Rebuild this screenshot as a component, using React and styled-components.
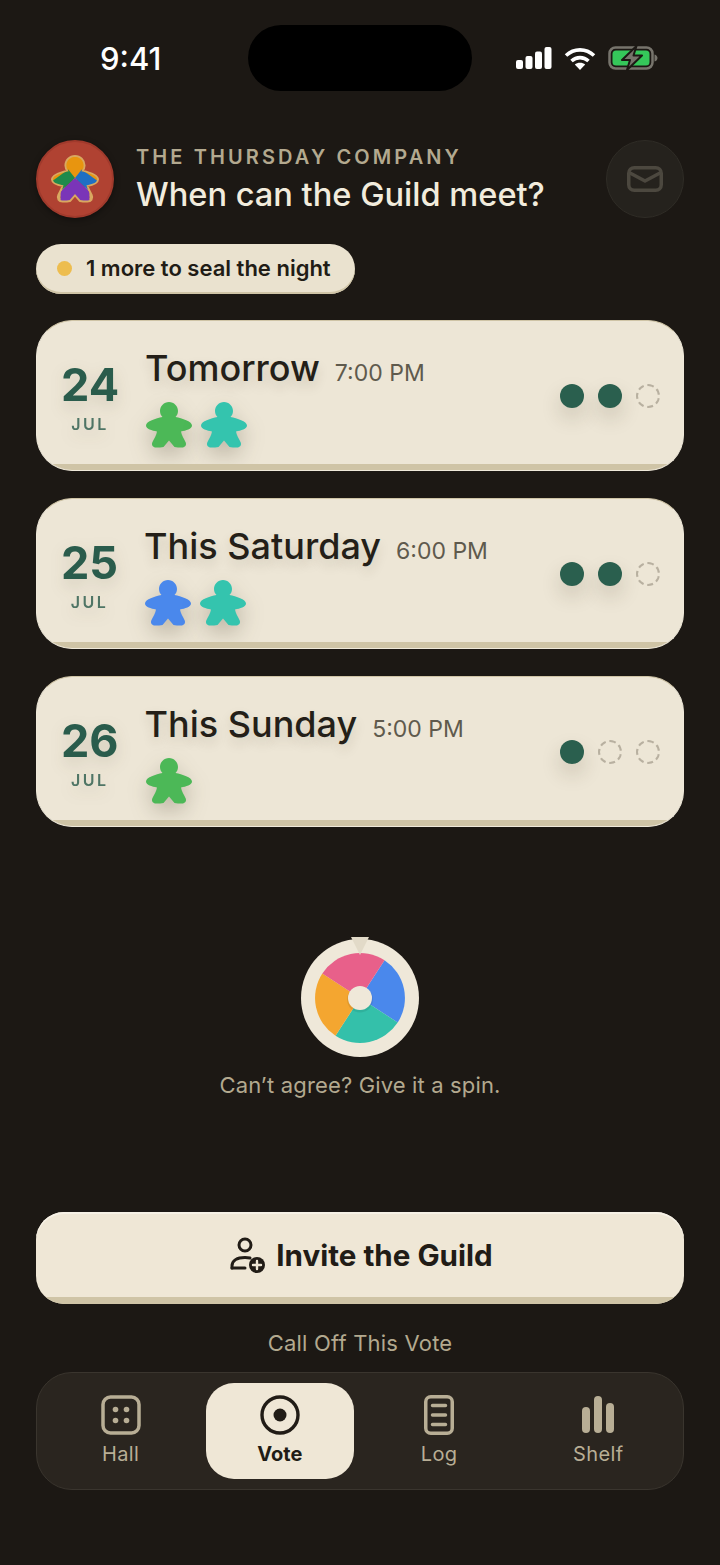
import React from 'react'
import styled, { createGlobalStyle } from 'styled-components'

const MEEPLE = 'M23 0C28 0 32 4 32 9C32 11.5 31 13.5 29.5 15C36 16.5 46 19 46 23.5C46 27 40 28.5 35 29.5C35.5 33 38 37 39.5 40C41 43 39 45.5 36 45.5C33 45.5 30.5 45.5 28.5 45L23 38.5L17.5 45C15.5 45.5 13 45.5 10 45.5C7 45.5 5 43 6.5 40C8 37 10.5 33 11 29.5C6 28.5 0 27 0 23.5C0 19 10 16.5 16.5 15C15 13.5 14 11.5 14 9C14 4 18 0 23 0Z'

const GREEN = '#4cb857'
const TEAL = '#34c4ae'
const BLUE = '#4a88ec'

const nights = [
  { day: '24', title: 'Tomorrow', time: '7:00 PM', meeples: [GREEN, TEAL], votes: 2 },
  { day: '25', title: 'This Saturday', time: '6:00 PM', meeples: [BLUE, TEAL], votes: 2 },
  { day: '26', title: 'This Sunday', time: '5:00 PM', meeples: [GREEN], votes: 1 },
]

const GlobalStyle = createGlobalStyle`
  html, body {
    margin: 0;
    padding: 0;
    background: #1c1814;
  }
  * {
    box-sizing: border-box;
  }
`

const Meeple = ({ color }) => (
  <MeepleIcon width="46" height="46" viewBox="0 0 46 46">
    <path d={MEEPLE} fill={color} />
  </MeepleIcon>
)

const Signal = () => (
  <svg width="36" height="22" viewBox="0 0 36 22" fill="#fff">
    <rect x="0" y="13" width="7" height="9" rx="2" />
    <rect x="9.5" y="9" width="7" height="13" rx="2" />
    <rect x="19" y="4.5" width="7" height="17.5" rx="2" />
    <rect x="28.5" y="0" width="7" height="22" rx="2" />
  </svg>
)

const Wifi = () => (
  <svg width="32" height="23" viewBox="0 0 32 23" fill="none" stroke="#fff" strokeWidth="3.6">
    <path d="M2 8.5C10 1 22 1 30 8.5" />
    <path d="M7.5 14C12.5 9.5 19.5 9.5 24.5 14" />
    <path d="M16 23L10.8 17.5C13.5 15.2 18.5 15.2 21.2 17.5Z" fill="#fff" stroke="none" />
  </svg>
)

const Battery = () => (
  <svg width="50" height="26" viewBox="0 0 50 26" fill="none">
    <rect x="1.5" y="2.5" width="43" height="21" rx="6" stroke="#77746c" strokeWidth="2.5" />
    <rect x="4.5" y="5.5" width="37" height="15" rx="3.5" fill="#35c75a" />
    <path d="M46.5 9.5C48.5 10 49.5 11.5 49.5 13C49.5 14.5 48.5 16 46.5 16.5Z" fill="#77746c" />
    <path d="M28.5 1L14 15H22L19 25L34 10.5H25.5Z" fill="#77746c" stroke="#1c1814" strokeWidth="2" strokeLinejoin="round" />
  </svg>
)

const Crest = () => (
  <svg width="48" height="48" viewBox="-2 -2 50 50">
    <defs>
      <clipPath id="crest">
        <path d={MEEPLE} />
      </clipPath>
    </defs>
    <path d={MEEPLE} fill="none" stroke="#d9a860" strokeWidth="4" strokeLinejoin="round" />
    <g clipPath="url(#crest)">
      <rect x="0" y="0" width="46" height="24" fill="#e8950f" />
      <path d="M-2 26L16 13L23 22L10 34H-2Z" fill="#1f8a4c" />
      <path d="M48 26L30 13L23 22L36 34H48Z" fill="#1f6fc4" />
      <path d="M23 22L38 36V46H8V36Z" fill="#7a35b8" />
    </g>
  </svg>
)

const MailIcon = () => (
  <svg width="36" height="26" viewBox="0 0 36 26" fill="none" stroke="#4c483f" strokeWidth="3.5" strokeLinecap="round" strokeLinejoin="round">
    <rect x="1.75" y="1.75" width="32.5" height="22.5" rx="5.5" />
    <path d="M3 7L18 15L33 7" />
  </svg>
)

const InviteIcon = () => (
  <svg width="36" height="36" viewBox="0 0 36 36" fill="none" stroke="#211c16" strokeWidth="3" strokeLinecap="round">
    <circle cx="15" cy="8" r="6" />
    <path d="M2 31V29C2 23.5 7 20.5 15 20.5C17 20.5 18.5 20.7 20 21" />
    <path d="M2 31H15" />
    <circle cx="27" cy="28" r="8" fill="#211c16" stroke="none" />
    <path d="M27 24V32M23 28H31" stroke="#efe7d6" strokeWidth="2.4" />
  </svg>
)

const Wheel = () => (
  <svg width="90" height="90" viewBox="-45 -45 90 90">
    <path d="M0 0L24.5-37.7A45 45 0 0 1 37.7 24.5Z" fill="#4a88ec" />
    <path d="M0 0L37.7 24.5A45 45 0 0 1-24.5 37.7Z" fill="#34c0aa" />
    <path d="M0 0L-24.5 37.7A45 45 0 0 1-37.7-24.5Z" fill="#f4a630" />
    <path d="M0 0L-37.7-24.5A45 45 0 0 1 24.5-37.7Z" fill="#e8608a" />
    <circle r="13" cy="1.5" fill="#000" opacity="0.08" />
    <circle r="12" fill="#efe8d9" />
  </svg>
)

const DiceIcon = () => (
  <svg width="40" height="40" viewBox="0 0 40 40" fill="none">
    <rect x="2" y="2" width="36" height="36" rx="7.5" stroke="#b8ae95" strokeWidth="3.5" />
    <g fill="#b8ae95">
      <circle cx="14.5" cy="14.5" r="2.8" />
      <circle cx="25.5" cy="14.5" r="2.8" />
      <circle cx="14.5" cy="25.5" r="2.8" />
      <circle cx="25.5" cy="25.5" r="2.8" />
    </g>
  </svg>
)

const VoteIcon = () => (
  <svg width="40" height="40" viewBox="0 0 40 40" fill="none">
    <circle cx="20" cy="20" r="18" stroke="#211c16" strokeWidth="3.4" />
    <circle cx="20" cy="20" r="6.5" fill="#211c16" />
  </svg>
)

const LogIcon = () => (
  <svg width="30" height="40" viewBox="0 0 30 40" fill="none" stroke="#b8ae95" strokeWidth="3.5" strokeLinecap="round">
    <rect x="1.75" y="1.75" width="26.5" height="36.5" rx="5" />
    <path d="M8.5 10.5H21.5M8.5 20H21.5M8.5 29.5H21.5" />
  </svg>
)

const ShelfIcon = () => (
  <svg width="32" height="40" viewBox="0 0 32 40" fill="#b8ae95">
    <rect x="0" y="12" width="8" height="26" rx="4" />
    <rect x="12" y="1" width="8" height="37" rx="4" />
    <rect x="24" y="8" width="8" height="30" rx="4" />
  </svg>
)

const NightCard = ({ night }) => (
  <Card>
    <DateBlock>
      <Day>{night.day}</Day>
      <Month>JUL</Month>
    </DateBlock>
    <CardBody>
      <TitleRow>
        <NightTitle>{night.title}</NightTitle>
        <NightTime>{night.time}</NightTime>
      </TitleRow>
      <Meeples>
        {night.meeples.map((color, i) => (
          <Meeple key={i} color={color} />
        ))}
      </Meeples>
    </CardBody>
    <Dots>
      {[0, 1, 2].map((i) => (
        <Dot key={i} $filled={i < night.votes} />
      ))}
    </Dots>
  </Card>
)

export default function App() {
  return (
    <Screen>
      <GlobalStyle />
      <StatusBar>
        <Clock>9:41</Clock>
        <Island />
        <StatusIcons>
          <Signal />
          <Wifi />
          <Battery />
        </StatusIcons>
      </StatusBar>

      <Header>
        <Avatar>
          <Crest />
        </Avatar>
        <HeaderText>
          <Eyebrow>THE THURSDAY COMPANY</Eyebrow>
          <Heading>When can the Guild meet?</Heading>
        </HeaderText>
        <MailButton>
          <MailIcon />
        </MailButton>
      </Header>

      <Pill>
        <PillDot />
        1 more to seal the night
      </Pill>

      <Cards>
        {nights.map((night) => (
          <NightCard key={night.day} night={night} />
        ))}
      </Cards>

      <Spin>
        <WheelDisc>
          <Pointer />
          <Wheel />
        </WheelDisc>
        <SpinLabel>Can’t agree? Give it a spin.</SpinLabel>
      </Spin>

      <InviteButton>
        <InviteIcon />
        Invite the Guild
      </InviteButton>
      <CallOff>Call Off This Vote</CallOff>

      <TabBar>
        <Tab>
          <DiceIcon />
          <TabLabel>Hall</TabLabel>
        </Tab>
        <Tab $active>
          <VoteIcon />
          <TabLabel $active>Vote</TabLabel>
        </Tab>
        <Tab>
          <LogIcon />
          <TabLabel>Log</TabLabel>
        </Tab>
        <Tab>
          <ShelfIcon />
          <TabLabel>Shelf</TabLabel>
        </Tab>
      </TabBar>
    </Screen>
  )
}

const Screen = styled.div`
  width: 720px;
  height: 1565px;
  padding: 25px 36px 0;
  background: #1c1814;
  font-family: Inter, "Liberation Sans", sans-serif;
  font-kerning: normal;
  text-rendering: optimizeLegibility;
  overflow: hidden;
  display: flex;
  flex-direction: column;
`

const StatusBar = styled.div`
  height: 66px;
  margin: 0 -36px;
  padding: 0 0 0 100px;
  display: flex;
  align-items: center;
`

const Clock = styled.div`
  width: 148px;
  flex: none;
  color: #fff;
  font-size: 31px;
  font-weight: 500;
`

const Island = styled.div`
  width: 224px;
  height: 66px;
  flex: none;
  border-radius: 33px;
  background: #000;
`

const StatusIcons = styled.div`
  flex: none;
  display: flex;
  align-items: center;
  gap: 12px;
  margin-left: 44px;
`

const Header = styled.div`
  margin-top: 49px;
  display: flex;
  align-items: center;
  gap: 22px;
`

const Avatar = styled.div`
  width: 78px;
  height: 78px;
  flex: none;
  border-radius: 50%;
  background: #b04232;
  border: 2px solid #a03a2c;
  display: flex;
  align-items: center;
  justify-content: center;
  box-shadow: 0 2px 6px rgba(0, 0, 0, 0.4);
`

const HeaderText = styled.div`
  flex: 1;
  display: flex;
  flex-direction: column;
  gap: 5px;
`

const Eyebrow = styled.div`
  color: #b3a98f;
  font-size: 20px;
  font-weight: 600;
  letter-spacing: 3.1px;
`

const Heading = styled.h1`
  margin: 0;
  color: #f2ecdd;
  font-size: 32.6px;
  font-weight: 500;
  line-height: 40px;
`

const MailButton = styled.div`
  width: 78px;
  height: 78px;
  flex: none;
  border-radius: 50%;
  background: #25221d;
  border: 1px solid #2f2c26;
  display: flex;
  align-items: center;
  justify-content: center;
`

const Pill = styled.div`
  margin-top: 26px;
  align-self: flex-start;
  height: 50px;
  padding: 0 24px 2px 21px;
  border-radius: 25px;
  background: #eae2cf;
  box-shadow: inset 0 -2px 0 #cfc4a6;
  color: #211c16;
  font-size: 22px;
  font-weight: 600;
  display: flex;
  align-items: center;
  gap: 14px;
`

const PillDot = styled.span`
  width: 15px;
  height: 15px;
  border-radius: 50%;
  background: #edbd4f;
`

const Cards = styled.div`
  margin-top: 26px;
  display: flex;
  flex-direction: column;
  gap: 27px;
`

const Card = styled.div`
  position: relative;
  overflow: hidden;
  height: 151px;
  padding: 0 23px 0 24px;
  border-radius: 36px;
  background: #ede6d6;
  border: 1px solid #efe9da;
  border-top-color: #cfc4a6;
  display: flex;
  align-items: center;
  gap: 26px;

  &::after {
    content: '';
    position: absolute;
    left: 0;
    right: 0;
    bottom: 0;
    height: 6px;
    background: #cfc4a6;
  }
`

const DateBlock = styled.div`
  display: flex;
  flex-direction: column;
  align-items: center;
  gap: 3px;
  margin-top: 2px;
  filter: drop-shadow(0 6px 8px rgba(60, 50, 30, 0.15));
`

const Day = styled.div`
  color: #2a5c4c;
  font-size: 45px;
  font-weight: 700;
  line-height: 52px;
`

const Month = styled.div`
  color: #4f7565;
  font-size: 16px;
  font-weight: 600;
  letter-spacing: 2.5px;
  line-height: 20px;
`

const CardBody = styled.div`
  flex: 1;
  display: flex;
  flex-direction: column;
  gap: 12px;
  margin-top: 3px;
`

const TitleRow = styled.div`
  display: flex;
  align-items: baseline;
  gap: 15px;
`

const NightTitle = styled.div`
  color: #241f18;
  font-size: 36px;
  font-weight: 500;
  line-height: 44px;
  text-shadow: 0 6px 12px rgba(60, 50, 30, 0.15);
`

const NightTime = styled.div`
  color: #5f5a4d;
  font-size: 23px;
`

const Meeples = styled.div`
  display: flex;
  gap: 9px;
  padding-left: 1px;
`

const MeepleIcon = styled.svg`
  display: block;
  filter: drop-shadow(0 9px 10px rgba(60, 50, 30, 0.25));
`

const Dots = styled.div`
  display: flex;
  gap: 14px;
`

const Dot = styled.span`
  width: 24px;
  height: 24px;
  border-radius: 50%;
  background: ${(p) => (p.$filled ? '#2a5f4e' : 'transparent')};
  border: ${(p) => (p.$filled ? 'none' : '2px dashed #b8b0a0')};
  box-shadow: ${(p) => (p.$filled ? '0 10px 20px rgba(60, 50, 30, 0.18)' : 'none')};
`

const Spin = styled.div`
  margin-top: 112px;
  display: flex;
  flex-direction: column;
  align-items: center;
  gap: 15px;
`

const WheelDisc = styled.div`
  position: relative;
  width: 118px;
  height: 118px;
  border-radius: 50%;
  background: #efe8d9;
  display: flex;
  align-items: center;
  justify-content: center;
`

const Pointer = styled.span`
  position: absolute;
  top: -2px;
  left: 50px;
  width: 18px;
  height: 18px;
  background: #e2dac8;
  clip-path: polygon(0 0, 100% 0, 50% 100%);
`

const SpinLabel = styled.div`
  color: #b3a98f;
  font-size: 22px;
  letter-spacing: 0.15px;
  line-height: 27px;
`

const InviteButton = styled.div`
  position: relative;
  overflow: hidden;
  margin-top: 113px;
  height: 92px;
  border-radius: 28px;
  background: #efe7d6;
  box-shadow: inset 0 2px 0 #f6f1e6;
  color: #211c16;
  font-size: 29.6px;
  font-weight: 700;
  display: flex;
  align-items: center;
  justify-content: center;
  gap: 10px;
  padding: 0 0 7px 3px;

  &::after {
    content: '';
    position: absolute;
    left: 0;
    right: 0;
    bottom: 0;
    height: 7px;
    background: #cfc4a6;
  }
`

const CallOff = styled.div`
  margin-top: 26px;
  text-align: center;
  color: #b3a98f;
  font-size: 22px;
  letter-spacing: 0.2px;
  line-height: 27px;
`

const TabBar = styled.div`
  margin-top: 15px;
  height: 118px;
  padding: 0 5px 0 4px;
  border-radius: 36px;
  background: #2a251f;
  border: 1px solid #3a352e;
  display: grid;
  grid-template-columns: repeat(4, 1fr);
  align-items: center;
  justify-items: center;
`

const Tab = styled.div`
  width: 148px;
  height: 96px;
  border-radius: 28px;
  background: ${(p) => (p.$active ? '#efe7d6' : 'transparent')};
  display: flex;
  flex-direction: column;
  align-items: center;
  justify-content: flex-end;
  gap: 7px;
  padding-bottom: 13px;
`

const TabLabel = styled.div`
  color: ${(p) => (p.$active ? '#211c16' : '#b8ae95')};
  font-size: 20px;
  font-weight: ${(p) => (p.$active ? 700 : 400)};
  letter-spacing: ${(p) => (p.$active ? 0 : '0.4px')};
  line-height: 24px;
`
